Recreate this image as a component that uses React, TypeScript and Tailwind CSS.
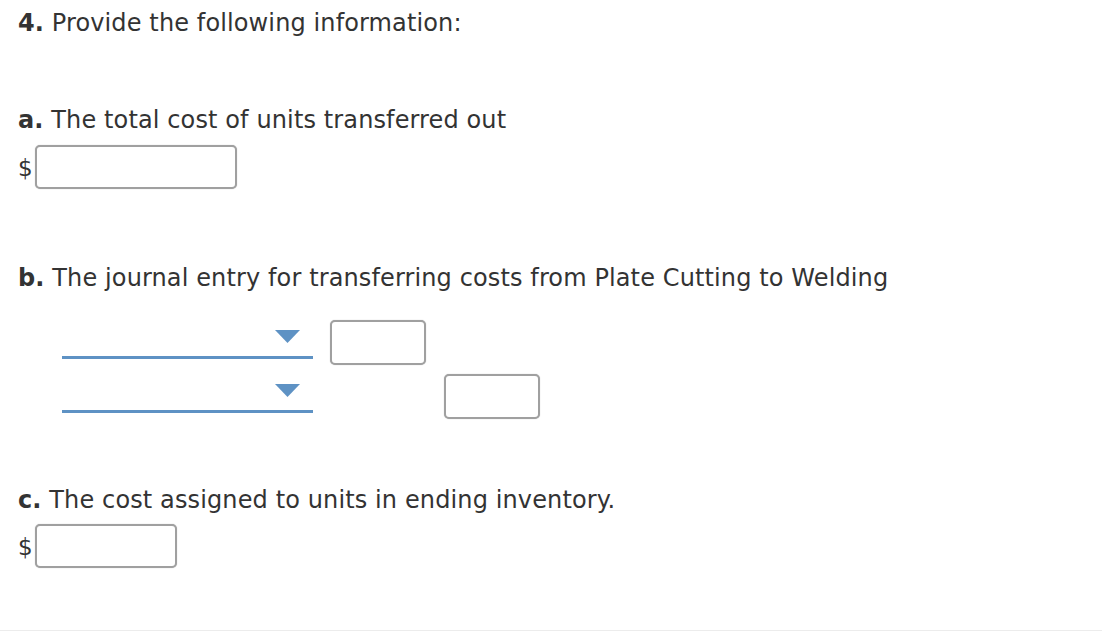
import React from "react";

const font = { fontFamily: '"DejaVu Sans", Verdana, sans-serif' };

function Dollar({ width }: { width: string }) {
  return (
    <div className="flex items-center h-[44px]">
      <span className="text-[23px] leading-[28px] text-[#333] w-[17px] mt-[2px]">$</span>
      <div className={`${width} h-[44px] border-2 border-[#a0a0a0] rounded-[5px] bg-white shadow-[0_0_1px_rgba(0,0,0,0.3)]`} />
    </div>
  );
}

function Drop() {
  return (
    <div className="relative w-[251px] h-[45px]">
      <div className="absolute left-0 right-0 bottom-[6px] h-[3px] bg-[#5e92c4]" />
      <svg className="absolute right-[13px] top-[10px]" width="25" height="13" viewBox="0 0 25 13">
        <polygon points="0,0 25,0 12.5,13" fill="#5e92c4" />
      </svg>
    </div>
  );
}

function Box() {
  return <div className="w-[96px] h-[45px] border-2 border-[#a0a0a0] rounded-[5px] bg-white shadow-[0_0_1px_rgba(0,0,0,0.3)]" />;
}

export default function App() {
  return (
    <div className="w-[1102px] h-[632px] bg-white overflow-hidden" style={font}>
      <div className="h-[631px] border-b border-[#ececec] pl-[18px] pt-[9px] text-[#333]">
        <div className="text-[24px] leading-[28px] tracking-[0.12px]">
          <b>4.</b> Provide the following information:
        </div>
        <div className="mt-[69px] text-[24px] leading-[28px] tracking-[0.12px]">
          <b>a.</b> The total cost of units transferred out
        </div>
        <div className="mt-[11px]">
          <Dollar width="w-[202px]" />
        </div>
        <div className="mt-[75px] text-[24px] leading-[28px] tracking-[0.12px]">
          <b>b.</b> The journal entry for transferring costs from Plate Cutting to Welding
        </div>
        <div className="mt-[28px] ml-[44px] flex flex-col gap-[9px]">
          <div className="flex gap-[17px]">
            <Drop />
            <Box />
          </div>
          <div className="flex gap-[17px]">
            <Drop />
            <div className="w-[96px]" />
            <div className="ml-[1px]">
              <Box />
            </div>
          </div>
        </div>
        <div className="mt-[67px] text-[24px] leading-[28px] tracking-[0.12px]">
          <b>c.</b> The cost assigned to units in ending inventory.
        </div>
        <div className="mt-[10px]">
          <Dollar width="w-[142px]" />
        </div>
      </div>
    </div>
  );
}
